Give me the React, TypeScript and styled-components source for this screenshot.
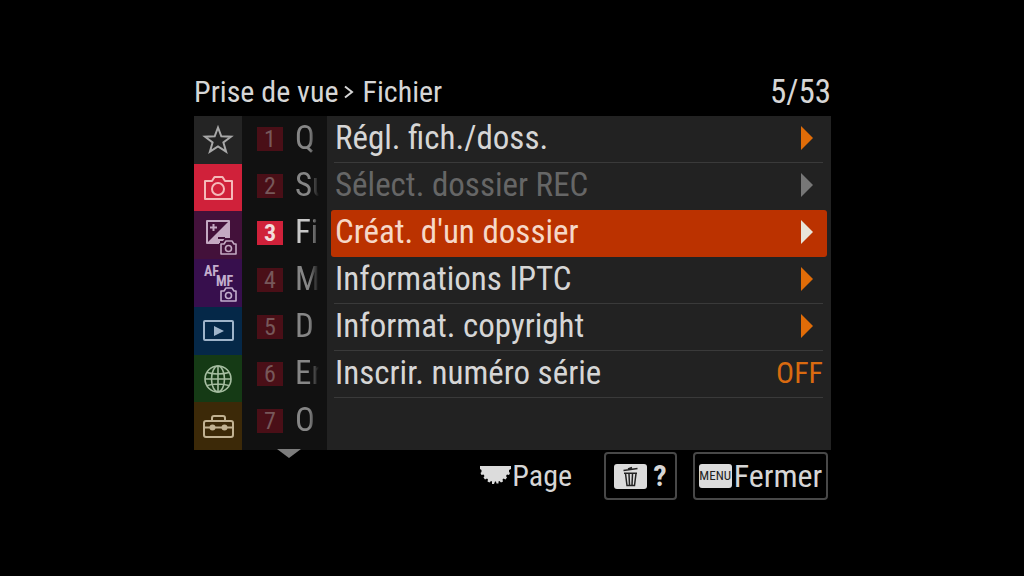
import React from "react";
import styled, { createGlobalStyle } from "styled-components";

const GlobalStyle = createGlobalStyle`
  * { box-sizing: border-box; }
  body {
    margin: 0;
    background: #000;
    color: #d6d6d6;
    font-family: "Roboto Condensed", Roboto, "Liberation Sans", sans-serif;
  }
  button {
    margin: 0;
    padding: 0;
    border: 0;
    background: none;
    color: inherit;
    font: inherit;
    cursor: pointer;
  }
`;

const Screen = styled.main`
  min-height: 100vh;
  padding: 68px 193px 0 194px;
`;

const Header = styled.header`
  display: flex;
  justify-content: space-between;
  height: 48px;
  line-height: 48px;
  white-space: nowrap;
`;

const Title = styled.h1`
  display: flex;
  align-items: center;
  margin: 0;
  font-size: 30px;
  font-weight: 400;
`;

const Chevron = styled.svg`
  width: 10px;
  height: 14px;
  margin: 0 9px 0 5px;
`;

const Counter = styled.span`
  font-size: 33px;
`;

const Panel = styled.div`
  position: relative;
  display: grid;
  grid-template-columns: 48px 85px minmax(0, 1fr);
  height: 334px;
  background: #222;
`;

const Tabs = styled.nav`
  display: grid;
  grid-auto-rows: 1fr;
`;

const Tab = styled.button<{ $bg: string; $fg: string }>`
  display: grid;
  place-items: center;
  min-height: 0;
  background: ${(p) => p.$bg};
  color: ${(p) => p.$fg};
`;

const TabIcon = styled.svg`
  display: block;
  width: 48px;
  height: 47px;
  fill: none;
  stroke: currentColor;
  stroke-width: 2;
  stroke-linejoin: round;
`;

const Groups = styled.nav`
  background: #111;
`;

const Group = styled.button<{ $active?: boolean }>`
  display: flex;
  align-items: center;
  width: 100%;
  height: 47px;
  padding: 0 6px 0 15px;
  color: ${(p) => (p.$active ? "#c8c8c8" : "#868686")};
`;

const GroupNumber = styled.span<{ $active?: boolean }>`
  flex: none;
  width: 26px;
  height: 24px;
  margin: 0 12px 2px 0;
  background: ${(p) => (p.$active ? "#d0213a" : "#4a0f17")};
  color: ${(p) => (p.$active ? "#f2dcdc" : "#77585a")};
  font-size: 24px;
  font-weight: ${(p) => (p.$active ? 700 : 400)};
  line-height: 25px;
`;

const GroupName = styled.span`
  flex: 1;
  height: 47px;
  overflow: hidden;
  font-size: 33px;
  line-height: 43px;
  text-align: left;
  white-space: nowrap;
  mask-image: linear-gradient(to right, #000 55%, transparent 92%);
`;

const ScrollHint = styled.svg`
  position: absolute;
  left: 83px;
  bottom: -8px;
  width: 24px;
  height: 9px;
`;

const Items = styled.ul`
  margin: 0;
  padding: 0 4px;
  list-style: none;
`;

type Tone = "normal" | "disabled" | "selected";

const toneColor: Record<Tone, string> = {
  normal: "#d6d6d6",
  disabled: "#666",
  selected: "#f6d8c8",
};

const Item = styled.button<{ $tone: Tone }>`
  display: flex;
  justify-content: space-between;
  align-items: center;
  width: 100%;
  height: 47px;
  padding: 0 4px 4px;
  border-radius: 3px;
  background: ${(p) => (p.$tone === "selected" ? "#bb3200" : "none")};
  color: ${(p) => toneColor[p.$tone]};
  font-size: 33px;
  line-height: 43px;
  white-space: nowrap;
`;

const ItemRow = styled.li<{ $line: boolean }>`
  height: 47px;
  background: linear-gradient(#3a3a3a, #3a3a3a) 3px 46px / calc(100% - 7px) ${(p) => (p.$line ? "1px" : "0")} no-repeat;
`;

const Arrow = styled.svg`
  width: 12px;
  height: 24px;
  margin-right: 10px;
`;

const Value = styled.span`
  color: #d96a10;
  font-size: 30px;
`;

const Footer = styled.footer`
  display: flex;
  justify-content: flex-end;
  align-items: center;
  gap: 16px;
  padding: 2px 3px 0 0;
  font-size: 32px;
  line-height: 44px;
`;

const PageHint = styled.div`
  display: flex;
  align-items: center;
  margin-right: 16px;
  font-size: 30px;
`;

const KeyButton = styled.button<{ $wide?: boolean }>`
  display: flex;
  align-items: center;
  justify-content: center;
  gap: ${(p) => (p.$wide ? 2 : 6)}px;
  width: ${(p) => (p.$wide ? 135 : 73)}px;
  height: 48px;
  border: 2px solid #484848;
  border-radius: 4px;
`;

const MenuKey = styled.span`
  width: 33px;
  height: 24px;
  border-radius: 3px;
  background: #dcdcdc;
  color: #222;
  font-size: 13px;
  line-height: 24px;
  text-align: center;
`;

const HelpMark = styled.span`
  font-size: 30px;
  font-weight: 700;
`;

const SmallCamera = () => (
  <g strokeWidth="1.6">
    <path d="M27 32h3l2-3h6l2 3h2v10H27z" />
    <circle cx="34.5" cy="36.5" r="3" />
  </g>
);

const tabs = [
  {
    label: "Mon Menu",
    bg: "#242424",
    fg: "#a8a8a8",
    icon: <path d="M24 11.5l3.300 8.800 9.700.4-7.600 5.800 2.700 9.200-8.100-5.300-8.100 5.300 2.700-9.200L11 20.700l9.700-.4z" strokeLinejoin="miter" />,
  },
  {
    label: "Prise de vue",
    bg: "#d0213a",
    fg: "#f5b9b9",
    icon: (
      <>
        <path d="M11 17h7l2.500-4h8l2.500 4h7v18H11z" />
        <circle cx="24" cy="25" r="6" />
      </>
    ),
  },
  {
    label: "Exposition/couleur",
    bg: "#43113a",
    fg: "#c4a9c2",
    icon: (
      <>
        <path d="M35 9v17h-4l-2 3h-3v2H13z" fill="currentColor" stroke="none" />
        <path d="M25 31H13V9h22v17" />
        <path d="M16 15.500h7M19.500 12v7" />
        <path d="M24 26h7" stroke="#43113a" />
        <SmallCamera />
      </>
    ),
  },
  {
    label: "Mise au point",
    bg: "#370f4d",
    fg: "#c3aecd",
    icon: (
      <>
        <g fill="currentColor" stroke="none" fontSize="14" fontWeight="700">
          <text x="10" y="17">AF</text>
          <text x="22" y="27">MF</text>
        </g>
        <SmallCamera />
      </>
    ),
  },
  {
    label: "Lecture",
    bg: "#052848",
    fg: "#9fb4ca",
    icon: (
      <>
        <rect x="10" y="14" width="29" height="19" rx="1" />
        <path d="M20 19v10l10-5z" fill="currentColor" stroke="none" />
      </>
    ),
  },
  {
    label: "Réseau",
    bg: "#153a15",
    fg: "#a5bda0",
    icon: (
      <g strokeWidth="1.6">
        <circle cx="24" cy="24" r="13" />
        <ellipse cx="24" cy="24" rx="6.500" ry="13" />
        <path d="M24 11v26M11 24h26M13 17.500q11 3 22 0M13 30.500q11-3 22 0" />
      </g>
    ),
  },
  {
    label: "Réglages",
    bg: "#3c2908",
    fg: "#c2b292",
    icon: (
      <>
        <rect x="10" y="18" width="29" height="16" rx="2" />
        <path d="M18 18v-3q0-2 2-2h9q2 0 2 2v3M10 24.500h29" />
        <circle cx="18.500" cy="24.500" r="3" fill="currentColor" stroke="none" />
        <circle cx="30.500" cy="24.500" r="3" fill="currentColor" stroke="none" />
      </>
    ),
  },
];

const groups = ["Q", "Su", "Fi", "M", "D", "En", "O"];
const activeGroup = 2;

const items: { label: string; tone: Tone; line: boolean; value?: string }[] = [
  { label: "Régl. fich./doss.", tone: "normal", line: true },
  { label: "Sélect. dossier REC", tone: "disabled", line: false },
  { label: "Créat. d'un dossier", tone: "selected", line: false },
  { label: "Informations IPTC", tone: "normal", line: true },
  { label: "Informat. copyright", tone: "normal", line: true },
  { label: "Inscrir. numéro série", tone: "normal", line: true, value: "OFF" },
];

const arrowColor: Record<Tone, string> = {
  normal: "#e06c08",
  disabled: "#777",
  selected: "#e8e4d8",
};

export default function App() {
  return (
    <>
      <GlobalStyle />
      <Screen>
        <Header>
          <Title>
            Prise de vue
            <Chevron viewBox="0 0 10 14" fill="none" stroke="currentColor" strokeWidth="2" aria-hidden="true">
              <path d="M1 1.500l7 5.500-7 5.500" />
            </Chevron>
            Fichier
          </Title>
          <Counter>5/53</Counter>
        </Header>
        <Panel>
          <Tabs>
            {tabs.map((tab) => (
              <Tab key={tab.label} $bg={tab.bg} $fg={tab.fg} aria-label={tab.label}>
                <TabIcon viewBox="0 0 48 47">{tab.icon}</TabIcon>
              </Tab>
            ))}
          </Tabs>
          <Groups>
            {groups.map((name, i) => (
              <Group key={name} $active={i === activeGroup}>
                <GroupNumber $active={i === activeGroup}>{i + 1}</GroupNumber>
                <GroupName>{name}</GroupName>
              </Group>
            ))}
          </Groups>
          <Items>
            {items.map((item) => (
              <ItemRow key={item.label} $line={item.line}>
                <Item $tone={item.tone} disabled={item.tone === "disabled"}>
                  {item.label}
                  {item.value ? (
                    <Value>{item.value}</Value>
                  ) : (
                    <Arrow viewBox="0 0 12 24" fill={arrowColor[item.tone]} aria-hidden="true">
                      <path d="M0 0l12 12L0 24z" />
                    </Arrow>
                  )}
                </Item>
              </ItemRow>
            ))}
          </Items>
          <ScrollHint viewBox="0 0 24 9" fill="#7c7c7c" aria-hidden="true">
            <path d="M0 0h24L12 9z" />
          </ScrollHint>
        </Panel>
        <Footer>
          <PageHint>
            <svg width="32" height="22" viewBox="0 0 32 22" fill="#dcdcdc" aria-hidden="true">
              <path d="M0 1h31v3l-2 1v2l1 1-1 2-2-.5-1 1.500 1 1.500-1.500 2-2-1-1 1 .5 2-2 1-1.500-1.500-1 .5v2h-2L16 16.500h-1L14 19h-2v-2.500l-1-.5-1.500 1.500-2-1 .5-2-1-1-2 1-1.500-2 1-1.500-1-1.500-2 .5-1-2 1-1V5L0 4z" />
            </svg>
            Page
          </PageHint>
          <KeyButton aria-label="Supprimer / Aide">
            <svg width="33" height="25" viewBox="0 0 33 25" aria-hidden="true">
              <rect width="33" height="25" rx="3" fill="#dcdcdc" />
              <g fill="none" stroke="#222" strokeWidth="1.5">
                <path d="M9.500 6.500l14-2M14 5l4-1.500M10 9.200h13M11.500 9.500l1.500 12h7.500l1.500-12M15 10l.5 11M18.500 10l-.5 11" />
              </g>
            </svg>
            <HelpMark>?</HelpMark>
          </KeyButton>
          <KeyButton $wide>
            <MenuKey>MENU</MenuKey>
            Fermer
          </KeyButton>
        </Footer>
      </Screen>
    </>
  );
}
